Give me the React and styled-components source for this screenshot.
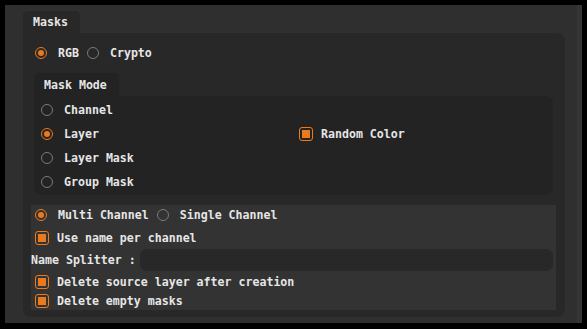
import styled, { createGlobalStyle } from "styled-components";

const GlobalStyle = createGlobalStyle`
  body {
    margin: 0;
    background: #000;
    font-family: "DejaVu Sans Mono", "Liberation Mono", monospace;
  }
`;

const ORANGE = "#ec7a1c";

const Window = styled.div`
  width: 587px;
  height: 329px;
  padding: 5px;
  box-sizing: border-box;
`;

const Panel = styled.div`
  display: flex;
  width: 577px;
  height: 318px;
  background: #2f2f2f;
`;

const PanelBody = styled.div`
  flex: 1;
  padding: 6px 0 0 18px;
`;

const Scrollbar = styled.div`
  width: 5px;
  background: #353535;
`;

const Tab = styled.div`
  display: inline-flex;
  align-items: center;
  height: ${(p) => p.h || 22}px;
  width: ${(p) => p.w}px;
  padding-left: 10px;
  box-sizing: border-box;
  background: ${(p) => p.bg};
  border-radius: 5px 5px 0 0;
  color: #e6e6e6;
  font-size: 11.6px;
  font-weight: bold;
`;

const Box = styled.div`
  width: ${(p) => p.w}px;
  height: ${(p) => p.h}px;
  box-sizing: border-box;
  background: ${(p) => p.bg};
  border-radius: 0 8px 8px 8px;
  padding: ${(p) => p.pad};
`;

const Row = styled.div`
  display: flex;
  align-items: center;
  height: ${(p) => p.h || 20}px;
  margin-top: ${(p) => p.mt || 0}px;
  padding-left: ${(p) => p.pl || 0}px;
`;

const Label = styled.span`
  color: #e6e6e6;
  font-size: 11.6px;
  font-weight: bold;
  white-space: pre;
  margin-left: ${(p) => p.ml ?? 11}px;
  margin-right: ${(p) => p.mr ?? 0}px;
`;

const RadioDot = styled.span`
  width: 12px;
  height: 12px;
  box-sizing: border-box;
  border-radius: 50%;
  border: 1.5px solid ${(p) => (p.on ? ORANGE : "#7a7a7a")};
  display: inline-flex;
  align-items: center;
  justify-content: center;
  flex-shrink: 0;

  &::after {
    content: "";
    width: 6px;
    height: 6px;
    border-radius: 50%;
    background: ${(p) => (p.on ? ORANGE : "transparent")};
  }
`;

const CheckBox = styled.span`
  width: 14px;
  height: 14px;
  box-sizing: border-box;
  border-radius: 3px;
  border: 1.5px solid ${ORANGE};
  display: inline-flex;
  align-items: center;
  justify-content: center;
  flex-shrink: 0;

  &::after {
    content: "";
    width: 8px;
    height: 8px;
    background: ${ORANGE};
  }
`;

const ModeGroup = styled.div`
  margin: 12px 0 0 11px;
`;

const ModeGrid = styled.div`
  display: grid;
  grid-template-columns: 258px 1fr;
  grid-auto-rows: 24px;
  padding: 2px 0 0 7px;
  align-items: center;
`;

const Cell = styled.div`
  display: flex;
  align-items: center;
`;

const Lower = styled.div`
  width: 525px;
  height: 105px;
  margin: 10px 0 0 8px;
  background: #333333;
  box-sizing: border-box;
`;

const Input = styled.div`
  flex: 1;
  height: 22px;
  margin: 0 3px 0 4px;
  background: #282828;
  border-radius: 7px;
`;

const Radio = ({ on, label, ml, mr }) => (
  <>
    <RadioDot on={on} />
    <Label ml={ml} mr={mr}>{label}</Label>
  </>
);

const Check = ({ label }) => (
  <>
    <CheckBox />
    <Label ml={8}>{label}</Label>
  </>
);

export default function App() {
  return (
    <Window>
      <GlobalStyle />
      <Panel>
        <PanelBody>
          <Tab w={57} bg="#282828">Masks</Tab>
          <Box w={542} h={284} bg="#282828" pad="12px 0 0 0">
            <Row h={16} pl={12}>
              <Radio on label="RGB" mr={8} />
              <Radio label="Crypto" />
            </Row>
            <ModeGroup>
              <Tab w={85} h={23} bg="#232323">Mask Mode</Tab>
              <Box w={519} h={99} bg="#232323" pad="0">
                <ModeGrid>
                  <Cell>
                    <Radio label="Channel" />
                  </Cell>
                  <Cell />
                  <Cell>
                    <Radio on label="Layer" />
                  </Cell>
                  <Cell>
                    <Check label="Random Color" />
                  </Cell>
                  <Cell>
                    <Radio label="Layer Mask" />
                  </Cell>
                  <Cell />
                  <Cell>
                    <Radio label="Group Mask" />
                  </Cell>
                </ModeGrid>
              </Box>
            </ModeGroup>
            <Lower>
              <Row h={20} pl={4}>
                <Radio on label="Multi Channel" mr={8} />
                <Radio label="Single Channel" />
              </Row>
              <Row h={20} mt={3} pl={4}>
                <Check label="Use name per channel" />
              </Row>
              <Row h={22} mt={1}>
                <Label ml={0}>Name Splitter :</Label>
                <Input />
              </Row>
              <Row h={21} pl={4}>
                <Check label="Delete source layer after creation" />
              </Row>
              <Row h={18} pl={4}>
                <Check label="Delete empty masks" />
              </Row>
            </Lower>
          </Box>
        </PanelBody>
        <Scrollbar />
      </Panel>
    </Window>
  );
}
